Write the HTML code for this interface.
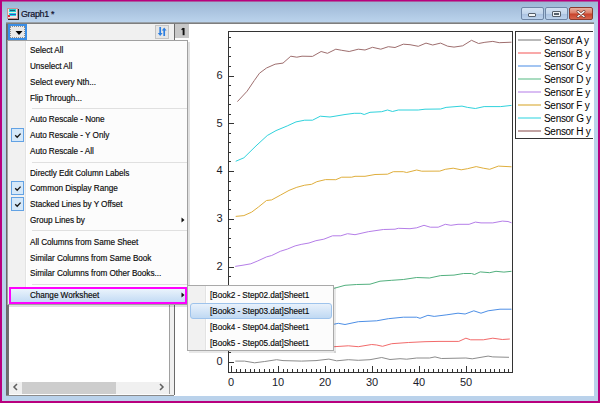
<!DOCTYPE html>
<html><head><meta charset="utf-8">
<style>
*{margin:0;padding:0;box-sizing:border-box}
html,body{width:600px;height:403px;overflow:hidden;background:#fff;font-family:"Liberation Sans",sans-serif}
.a{position:absolute}
.btn{position:absolute;top:7px;height:13px;border:1px solid #6f86a6;border-radius:2px;background:linear-gradient(#d4e2f2 0%,#c2d5ec 50%,#a9c1e1 51%,#bcd2ec 100%)}
.mi{position:absolute;left:30px;font-size:8.2px;color:#000;white-space:nowrap;line-height:10px;-webkit-text-stroke:0.15px #222;letter-spacing:-0.05px}
.sep{position:absolute;left:32px;width:155px;height:1px;background:#e0e0e0}
.chk{position:absolute;left:11px;width:13px;height:14px;border:1px solid #62a2e4;background:#d5e8f9}
.arr{position:absolute;width:0;height:0;border-left:4px solid #111;border-top:4px solid transparent;border-bottom:4px solid transparent}
.sm{position:absolute;left:210px;font-size:8.2px;color:#000;white-space:nowrap;line-height:10px;-webkit-text-stroke:0.15px #222;letter-spacing:-0.05px}
.lg{position:absolute;left:544px;font-size:10px;color:#000;letter-spacing:-0.3px;white-space:nowrap;line-height:11px}
.ll{position:absolute;left:518px;width:23px;height:2px}
.yl{position:absolute;font-size:11px;color:#1a1a2a;line-height:11px;text-align:right;width:20px;left:202.6px}
.xl{position:absolute;font-size:11px;color:#1a1a2a;line-height:11px;text-align:center;width:30px;top:377px}
</style></head><body>
<!-- window frame -->
<div class="a" style="left:0;top:0;width:600px;height:403px;background:#bad2eb"></div>
<div class="a" style="left:0;top:0;width:600px;height:1px;background:#b8007e"></div><div class="a" style="left:0;top:1px;width:600px;height:1px;background:#ab5a9e"></div>
<div class="a" style="left:0;top:0;width:2px;height:403px;background:#b8007e"></div>
<div class="a" style="left:598px;top:0;width:2px;height:403px;background:#b8007e"></div>
<div class="a" style="left:0;top:401px;width:600px;height:2px;background:#b8007e"></div>
<div class="a" style="left:2px;top:2px;width:596px;height:20px;background:linear-gradient(#9cb7d5,#bbd3ec)"></div>
<!-- icon -->
<div class="a" style="left:8px;top:9px;width:11px;height:11px;background:#202020;"></div>
<div class="a" style="left:7px;top:8px;width:11px;height:11px;background:#f2e4e4;border:1px solid #c89494"></div>
<div class="a" style="left:9px;top:9px;width:7px;height:3px;background:#22d2cc;"></div>
<div class="a" style="left:10px;top:10px;width:5px;height:1px;background:#1a5a80;"></div>
<div class="a" style="left:9px;top:13px;width:7px;height:3px;background:#22d8e0;"></div>
<div class="a" style="left:10px;top:14px;width:6px;height:1px;background:#3050c0;"></div>
<div class="a" style="left:8px;top:15px;width:2px;height:2px;background:#e03040;"></div>
<div class="a" style="left:21px;top:9px;font-size:8.9px;letter-spacing:-0.3px;color:#10102a;line-height:11px;-webkit-text-stroke:0.2px #10102a">Graph1 *</div>
<!-- title buttons -->
<div class="btn" style="left:521px;width:23px"></div>
<div class="a" style="left:528px;top:13px;width:8px;height:4px;background:#f4f6f8;border:1px solid #56606c;border-radius:1px"></div>
<div class="btn" style="left:545px;width:23px"></div>
<div class="a" style="left:552px;top:11px;width:9px;height:6px;border:1px solid #56606c;background:#eef2f6;border-radius:1px"></div>
<div class="a" style="left:554px;top:13px;width:5px;height:2px;background:#56606c"></div>
<div class="btn" style="left:569px;width:24px;border-color:#8a3a2e;background:linear-gradient(#eab0a0 0%,#dc7e68 45%,#c8432c 55%,#d8664e 100%)"></div>
<svg class="a" style="left:576px;top:10px" width="10" height="8" viewBox="0 0 10 8"><path d="M2 1.5 L8 6.5 M8 1.5 L2 6.5" stroke="#6a3a32" stroke-width="2.8" stroke-linecap="round"/><path d="M2 1.5 L8 6.5 M8 1.5 L2 6.5" stroke="#fff" stroke-width="1.5" stroke-linecap="round"/></svg>
<!-- client area -->
<div class="a" style="left:6px;top:22px;width:588px;height:374px;background:#fff"></div>
<div class="a" style="left:6px;top:22px;width:588px;height:1px;background:#98a0a8"></div><div class="a" style="left:6px;top:23px;width:588px;height:1px;background:#7e7e7e"></div>



<!-- left panel -->
<div class="a" style="left:6px;top:24px;width:168px;height:371px;background:#f0f0f0"></div>
<div class="a" style="left:6px;top:24px;width:3px;height:371px;background:linear-gradient(90deg,#666,#747474)"></div>
<div class="a" style="left:9px;top:40px;width:160px;height:354px;background:#fff"></div>
<div class="a" style="left:169px;top:40px;width:1px;height:355px;background:#a0a0a0"></div>
<div class="a" style="left:9px;top:394px;width:161px;height:1px;background:#fdfdfd"></div><div class="a" style="left:6px;top:395px;width:168px;height:1px;background:#8a8a8a"></div>
<div class="a" style="left:174px;top:24px;width:1px;height:371px;background:#6a6a6a"></div>
<!-- toolbar -->
<div class="a" style="left:8px;top:24px;width:19px;height:16px;border:2px solid #3a8ee6;background:#e9e9e9"></div>
<div class="a" style="left:10px;top:26px;width:15px;height:12px;border:1px dotted #8a8a8a"></div>
<svg class="a" style="left:15px;top:31px" width="8" height="4" viewBox="0 0 8 4"><path d="M0.5 0 H7.5 L4 4Z" fill="#000"/></svg>
<div class="a" style="left:155px;top:25px;width:14px;height:14px;border:1px solid #c4c4c4;background:#e6e6e6"></div>
<svg class="a" style="left:157px;top:27px" width="10" height="10" viewBox="0 0 10 10">
<path d="M3.2 0 V6.5" stroke="#2d7fe0" stroke-width="1.7"/><path d="M0.8 6 L3.2 9 L5.6 6Z" fill="#2d7fe0"/>
<path d="M7.2 9 V3" stroke="#2d7fe0" stroke-width="1.7"/><path d="M4.8 3.4 L7.2 0.4 L9.6 3.4Z" fill="#2d7fe0"/>
</svg>
<!-- scrollbar -->
<div class="a" style="left:9px;top:382px;width:160px;height:12px;background:#f0f0f0"></div>
<div class="a" style="left:22px;top:382px;width:94px;height:12px;background:#cdcdcd"></div>
<svg class="a" style="left:12px;top:383px" width="7" height="8" viewBox="0 0 7 8"><path d="M5 1 L2 4 L5 7" stroke="#606060" stroke-width="1.5" fill="none"/></svg>
<svg class="a" style="left:158px;top:383px" width="7" height="8" viewBox="0 0 7 8"><path d="M2 1 L5 4 L2 7" stroke="#606060" stroke-width="1.5" fill="none"/></svg>

<!-- layer tab -->
<div class="a" style="left:175px;top:24px;width:14px;height:14px;background:#c8c8c8"></div>
<svg class="a" style="left:179.5px;top:27px" width="8" height="10" viewBox="0 0 8 10"><path d="M3.6 1 V8.2" stroke="#111" stroke-width="1.9"/><path d="M1.6 2.8 L3.6 1.2" stroke="#111" stroke-width="1.4"/></svg>

<!-- graph -->
<div class="a" style="left:175px;top:24px;width:418px;height:371px;overflow:hidden">
<div class="a" style="left:-175px;top:-24px;width:600px;height:403px">
<svg class="a" style="left:0;top:0" width="600" height="403" viewBox="0 0 600 403">
<path d="M235.3 361.1 L244.5 361.1 L254.6 362.8 L264.7 361.5 L276.6 359.7 L283.0 360.6 L301.4 361.1 L316.0 360.6 L328.9 359.1 L336.7 360.8 L348.3 359.7 L358.3 360.3 L370.0 359.7 L381.7 357.5 L390.0 359.5 L400.0 358.7 L406.7 359.2 L416.7 358.0 L429.5 358.0 L435.0 356.9 L441.4 358.5 L465.9 358.0 L472.2 358.8 L488.1 356.1 L492.8 356.9 L509.0 357.3" stroke="#8c8c8c" stroke-width="1" fill="none"/>
<path d="M235.7 349.5 L270.0 348.5 L310.0 347.5 L334.2 346.7 L348.3 345.8 L358.3 346.7 L371.7 344.5 L376.7 345.0 L382.5 346.3 L391.7 343.7 L408.3 342.5 L425.0 341.7 L439.0 341.4 L458.8 341.4 L465.9 338.2 L470.7 339.8 L483.3 339.8 L492.8 338.2 L502.3 339.5 L509.8 339.0" stroke="#f26a6a" stroke-width="1" fill="none"/>
<path d="M235.7 342.0 L260.0 335.0 L290.0 329.0 L320.0 325.5 L334.2 324.2 L338.3 323.3 L345.0 324.5 L358.3 321.7 L376.7 320.8 L388.3 318.7 L403.3 317.2 L416.7 317.2 L420.0 318.3 L427.9 315.3 L434.2 316.4 L446.9 314.8 L458.0 313.2 L465.1 314.0 L473.8 310.8 L481.0 313.2 L488.1 310.8 L500.0 309.2 L511.5 309.2" stroke="#4d8fe6" stroke-width="1" fill="none"/>
<path d="M235.7 313.0 L250.0 308.0 L270.0 300.0 L290.0 295.0 L310.0 291.0 L334.2 288.3 L345.0 285.3 L356.7 284.5 L370.0 284.2 L380.0 281.2 L391.7 280.3 L403.3 279.5 L416.7 277.5 L429.5 278.0 L440.6 275.6 L454.0 275.1 L463.5 273.5 L471.5 273.5 L474.6 274.5 L480.2 271.9 L489.7 272.7 L496.0 271.3 L503.9 272.1 L511.5 271.3" stroke="#52b07e" stroke-width="1" fill="none"/>
<path d="M235.2 266.4 L243.0 265.2 L250.8 263.8 L257.8 260.9 L266.5 256.9 L271.7 255.5 L280.3 251.3 L287.3 249.1 L295.1 245.9 L301.2 244.4 L309.0 243.0 L315.9 240.7 L323.8 239.2 L332.5 235.8 L340.8 235.8 L347.5 233.7 L355.0 234.7 L368.3 231.7 L383.3 229.5 L395.0 229.2 L398.3 228.3 L410.0 228.7 L416.7 227.8 L424.0 225.3 L430.3 227.2 L438.2 227.2 L445.3 224.3 L450.9 225.3 L458.0 224.3 L469.1 224.3 L475.4 222.1 L481.0 222.9 L492.8 222.9 L502.3 221.1 L508.0 221.5 L511.5 222.8" stroke="#b57ee8" stroke-width="1" fill="none"/>
<path d="M235.7 216.4 L243.9 215.6 L251.7 212.1 L258.6 206.9 L266.5 200.5 L271.7 199.9 L280.3 195.2 L289.0 190.4 L296.8 187.3 L304.7 185.2 L311.6 184.3 L316.8 181.7 L325.5 179.6 L335.8 179.7 L341.7 177.2 L351.7 177.2 L355.0 176.3 L365.0 176.3 L375.0 174.5 L387.5 174.2 L393.3 171.7 L403.3 171.7 L406.7 172.5 L416.7 170.0 L421.7 171.2 L439.8 171.1 L445.3 169.3 L453.2 168.2 L461.2 169.8 L467.5 168.7 L476.2 166.6 L483.3 168.2 L489.7 169.3 L498.4 166.1 L511.5 166.8" stroke="#dfae3c" stroke-width="1" fill="none"/>
<path d="M235.7 161.3 L243.9 157.8 L256.0 145.9 L267.3 135.5 L276.0 130.6 L287.3 125.9 L296.0 121.9 L304.7 120.2 L312.5 120.2 L320.3 116.2 L330.0 117.0 L335.0 116.2 L345.0 114.5 L354.2 113.3 L360.8 113.3 L364.2 114.5 L370.0 112.3 L381.7 111.7 L387.5 110.0 L392.5 111.5 L398.3 110.0 L418.3 110.0 L425.0 109.2 L440.6 109.0 L446.1 107.4 L462.0 106.1 L467.5 107.4 L475.4 108.5 L484.1 106.6 L500.7 106.6 L511.5 105.4" stroke="#2fd2dc" stroke-width="1" fill="none"/>
<path d="M237.4 101.6 L247.1 91.2 L254.3 80.5 L259.5 73.2 L266.5 68.0 L275.1 64.2 L283.0 63.1 L290.8 56.2 L296.8 57.2 L302.0 56.2 L312.5 56.4 L321.1 51.5 L327.5 53.3 L335.8 49.2 L341.7 50.3 L349.2 51.5 L358.3 49.2 L365.0 50.0 L372.5 47.3 L380.8 49.2 L388.3 46.7 L395.0 47.5 L403.3 44.2 L410.0 44.7 L418.3 46.3 L426.0 43.1 L432.7 45.0 L440.6 43.1 L447.7 46.2 L454.0 47.1 L462.7 45.8 L471.5 40.3 L478.6 43.5 L484.9 42.3 L492.8 41.4 L499.2 42.7 L511.5 42.2" stroke="#9e6e6e" stroke-width="1" fill="none"/>
<path d="M229 362.5 H234 M229 352.5 H231 M229 343.5 H231 M229 333.5 H231 M229 324.5 H231 M229 314.5 H234 M229 305.5 H231 M229 295.5 H231 M229 286.5 H231 M229 276.5 H231 M229 267.5 H234 M229 257.5 H231 M229 247.5 H231 M229 238.5 H231 M229 228.5 H231 M229 219.5 H234 M229 209.5 H231 M229 200.5 H231 M229 190.5 H231 M229 181.5 H231 M229 171.5 H234 M229 161.5 H231 M229 152.5 H231 M229 142.5 H231 M229 133.5 H231 M229 123.5 H234 M229 114.5 H231 M229 104.5 H231 M229 95.5 H231 M229 85.5 H231 M229 76.5 H234 M229 66.5 H231 M229 56.5 H231 M229 47.5 H231 M229 37.5 H231 M231.5 372 V366 M236.5 372 V369 M240.5 372 V369 M245.5 372 V369 M250.5 372 V369 M254.5 372 V369 M259.5 372 V369 M264.5 372 V369 M269.5 372 V369 M273.5 372 V369 M278.5 372 V366 M283.5 372 V369 M287.5 372 V369 M292.5 372 V369 M297.5 372 V369 M302.5 372 V369 M306.5 372 V369 M311.5 372 V369 M316.5 372 V369 M320.5 372 V369 M325.5 372 V366 M330.5 372 V369 M334.5 372 V369 M339.5 372 V369 M344.5 372 V369 M348.5 372 V369 M353.5 372 V369 M358.5 372 V369 M363.5 372 V369 M367.5 372 V369 M372.5 372 V366 M377.5 372 V369 M381.5 372 V369 M386.5 372 V369 M391.5 372 V369 M396.5 372 V369 M400.5 372 V369 M405.5 372 V369 M410.5 372 V369 M414.5 372 V369 M419.5 372 V366 M424.5 372 V369 M428.5 372 V369 M433.5 372 V369 M438.5 372 V369 M442.5 372 V369 M447.5 372 V369 M452.5 372 V369 M457.5 372 V369 M461.5 372 V369 M466.5 372 V366 M471.5 372 V369 M475.5 372 V369 M480.5 372 V369 M485.5 372 V369 M490.5 372 V369 M494.5 372 V369 M499.5 372 V369 M504.5 372 V369 M508.5 372 V369" stroke="#333" stroke-width="1" fill="none" shape-rendering="crispEdges"/>
<rect x="228.5" y="31.5" width="283.5" height="341" stroke="#333" stroke-width="1" fill="none" shape-rendering="crispEdges"/>
<rect x="515.5" y="31.5" width="100" height="106.5" stroke="#333" stroke-width="1" fill="none" shape-rendering="crispEdges"/>
</svg>
<div class="yl" style="top:356.4px">0</div><div class="yl" style="top:308.6px">1</div><div class="yl" style="top:260.9px">2</div><div class="yl" style="top:213.2px">3</div><div class="yl" style="top:165.4px">4</div><div class="yl" style="top:117.7px">5</div><div class="yl" style="top:69.9px">6</div>
<div class="xl" style="left:216.0px">0</div><div class="xl" style="left:263.0px">10</div><div class="xl" style="left:310.0px">20</div><div class="xl" style="left:357.0px">30</div><div class="xl" style="left:404.0px">40</div><div class="xl" style="left:451.0px">50</div>
<div class="ll" style="top:39px;background:#b9b9b9"></div><div class="lg" style="top:34.5px">Sensor A y</div><div class="ll" style="top:52px;background:#f9a9a9"></div><div class="lg" style="top:47.5px">Sensor B y</div><div class="ll" style="top:65px;background:#a3c5f2"></div><div class="lg" style="top:60.5px">Sensor C y</div><div class="ll" style="top:78px;background:#a9dcc0"></div><div class="lg" style="top:73.5px">Sensor D y</div><div class="ll" style="top:91px;background:#d9bdf3"></div><div class="lg" style="top:86.5px">Sensor E y</div><div class="ll" style="top:104px;background:#ead08f"></div><div class="lg" style="top:99.5px">Sensor F y</div><div class="ll" style="top:117px;background:#94e9ef"></div><div class="lg" style="top:112.5px">Sensor G y</div><div class="ll" style="top:130px;background:#c2a3a3"></div><div class="lg" style="top:125.5px">Sensor H y</div>
</div>
</div>

<!-- menu -->
<div class="a" style="left:188px;top:42px;width:2px;height:265px;background:rgba(0,0,0,0.12)"></div>
<div class="a" style="left:9px;top:305px;width:181px;height:2px;background:rgba(0,0,0,0.12)"></div>
<div class="a" style="left:7px;top:40px;width:181px;height:265px;background:#fcfcfc;border:1px solid #a0a0a0"></div>
<div class="a" style="left:8px;top:41px;width:17px;height:263px;background:#f1f1f1"></div>
<div class="a" style="left:25px;top:41px;width:1px;height:263px;background:#e3e3e3"></div>
<div class="a" style="left:26px;top:41px;width:1px;height:263px;background:#fff"></div>
<div class="mi" style="top:46.0px">Select All</div><div class="mi" style="top:62.1px">Unselect All</div><div class="mi" style="top:78.1px">Select every Nth...</div><div class="mi" style="top:94.1px">Flip Through...</div><div class="sep" style="top:108px"></div><div class="mi" style="top:115.0px">Auto Rescale - None</div><div class="chk" style="top:128px"></div><svg class="a" style="left:14px;top:132px" width="8" height="7" viewBox="0 0 8 7"><path d="M1.2 3.3 L3.2 5.3 L6.6 1.6" stroke="#1a1a1a" stroke-width="1.35" fill="none"/></svg><div class="mi" style="top:131.0px">Auto Rescale - Y Only</div><div class="mi" style="top:146.8px">Auto Rescale - All</div><div class="sep" style="top:162px"></div><div class="mi" style="top:168.6px">Directly Edit Column Labels</div><div class="chk" style="top:181px"></div><svg class="a" style="left:14px;top:185px" width="8" height="7" viewBox="0 0 8 7"><path d="M1.2 3.3 L3.2 5.3 L6.6 1.6" stroke="#1a1a1a" stroke-width="1.35" fill="none"/></svg><div class="mi" style="top:184.2px">Common Display Range</div><div class="chk" style="top:197px"></div><svg class="a" style="left:14px;top:201px" width="8" height="7" viewBox="0 0 8 7"><path d="M1.2 3.3 L3.2 5.3 L6.6 1.6" stroke="#1a1a1a" stroke-width="1.35" fill="none"/></svg><div class="mi" style="top:200.2px">Stacked Lines by Y Offset</div><svg class="a" style="left:181px;top:217px" width="4" height="6" viewBox="0 0 4 6"><path d="M0.5 0.5 L3.5 3 L0.5 5.5Z" fill="#111"/></svg><div class="mi" style="top:216.0px">Group Lines by</div><div class="sep" style="top:230px"></div><div class="mi" style="top:237.8px">All Columns from Same Sheet</div><div class="mi" style="top:253.5px">Similar Columns from Same Book</div><div class="mi" style="top:269.3px">Similar Columns from Other Books...</div><div class="sep" style="top:284px"></div><div class="a" style="left:9px;top:287px;width:178px;height:17px;border:2px solid #ff00ff;background:linear-gradient(#eaf3fc,#c3dbf4)"></div><svg class="a" style="left:181px;top:292px" width="4" height="6" viewBox="0 0 4 6"><path d="M0.5 0.5 L3.5 3 L0.5 5.5Z" fill="#111"/></svg><div class="mi" style="top:291.1px">Change Worksheet</div>

<!-- submenu -->
<div class="a" style="left:334px;top:287px;width:2px;height:66px;background:rgba(0,0,0,0.09)"></div>
<div class="a" style="left:189px;top:351px;width:147px;height:2px;background:rgba(0,0,0,0.09)"></div>
<div class="a" style="left:187px;top:285px;width:147px;height:66px;background:#fcfcfc;border:1px solid #a9a9a9"></div>
<div class="a" style="left:188px;top:286px;width:17px;height:64px;background:#f1f1f1"></div>
<div class="a" style="left:205px;top:286px;width:1px;height:64px;background:#e3e3e3"></div>
<div class="a" style="left:206px;top:286px;width:1px;height:64px;background:#fff"></div>
<div class="sm" style="top:291.3px">[Book2 - Step02.dat]Sheet1</div><div class="a" style="left:190px;top:303px;width:142px;height:16px;border:1px solid #9ec3ec;border-radius:3px;background:linear-gradient(#e8f1fb,#c0d9f3)"></div><div class="sm" style="top:307.3px">[Book3 - Step03.dat]Sheet1</div><div class="sm" style="top:323.3px">[Book4 - Step04.dat]Sheet1</div><div class="sm" style="top:339.3px">[Book5 - Step05.dat]Sheet1</div>
</body></html>
